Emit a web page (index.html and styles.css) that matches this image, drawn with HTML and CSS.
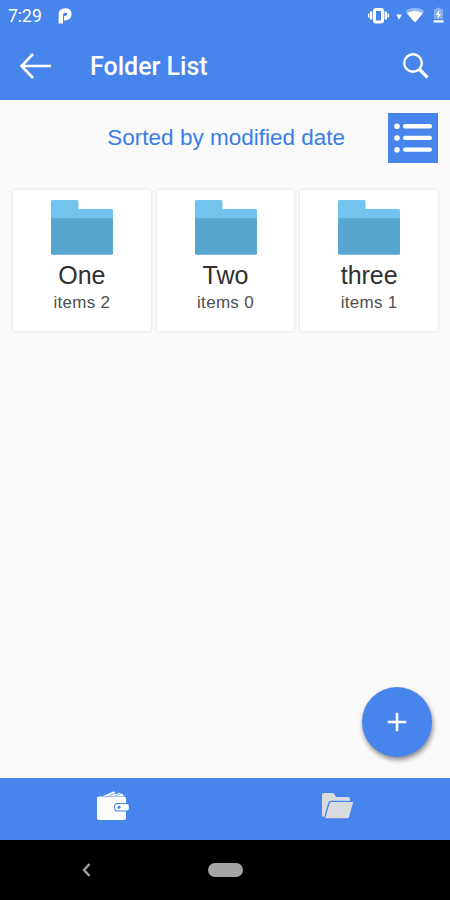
FILE: index.html
```html
<!DOCTYPE html>
<html lang="en">
<head>
    <meta charset="UTF-8">
    <meta name="viewport" content="width=device-width, initial-scale=1.0">
    <title>Folder List</title>
    <link rel="stylesheet" href="styles.css">
</head>
<body>
    <header>
        <div class="status-bar">
            <span class="time">7:29</span>
            <svg class="parking" width="14" height="16" viewBox="0 0 14 16"><path d="M2.8 15.500V6.800Q2.800 2.500 7.200 2.500T11.400 6.200T7.400 10.200H6" fill="none" stroke="#fff" stroke-width="4.400"/></svg>
            <svg class="status-icons" width="80" height="18" viewBox="0 0 80 18">
                <rect x="6.500" y="2.500" width="8" height="12.500" rx="1.500" fill="none" stroke="#fff" stroke-width="3"/>
                <path d="M3.200 4.500v8M17.800 4.500v8" stroke="#fff" stroke-width="2.400"/>
                <path d="M.8 6.500v4M20.200 6.500v4" stroke="#fff" stroke-width="1.500"/>
                <path d="M28.300 7.500h5.600L31 12.800z" fill="#fff"/>
                <path d="M37.300 4.400c5.500-4.800 13.800-4.800 19.200 0L47 15.500z" fill="#fff" opacity=".4"/>
                <path d="M39 6.600c4.500-3.600 11.400-3.600 15.800 0L47 15.500z" fill="#fff"/>
                <path d="M66 2h2.500V.8h4V2H75v10h-9z" fill="#fff" opacity=".35"/>
                <path d="M71.500 2.500L67.800 8h2.200L69.500 12l3.600-5.300h-2.300zM65.500 13.200h10v2.300h-10z" fill="#fff"/>
            </svg>
        </div>
        <div class="toolbar">
            <svg class="back" width="34" height="28" viewBox="0 0 34 28"><path d="M32 14H3M14 2L2.500 14L14 26" fill="none" stroke="#fff" stroke-width="2.600"/></svg>
            <h1>Folder List</h1>
            <svg class="search" width="28" height="28" viewBox="0 0 28 28" fill="none" stroke="#fff"><circle cx="11" cy="11" r="8.800" stroke-width="2.400"/><path d="M17.500 17.500L25.500 25.500" stroke-width="3.200"/></svg>
        </div>
    </header>

    <main>
        <div class="sort-bar">
            <span class="sort-label">Sorted by modified date</span>
            <svg class="list-btn" width="50" height="50" viewBox="0 0 50 50">
                <rect width="50" height="50" fill="#4785ed"/>
                <g fill="#fff">
                    <circle cx="9" cy="13.300" r="2.800"/><rect x="15" y="11" width="29" height="4.400" rx="2"/>
                    <circle cx="9" cy="25" r="2.800"/><rect x="15" y="22.700" width="29" height="4.400" rx="2"/>
                    <circle cx="9" cy="36.700" r="2.800"/><rect x="15" y="34.400" width="29" height="4.400" rx="2"/>
                </g>
            </svg>
        </div>

        <div class="folders">
            <div class="card">
                <svg width="62" height="55" viewBox="0 0 62 55"><path d="M1.500 0H26q1.500 0 1.500 1.500V9H60.500q1.500 0 1.500 1.500V19H0V1.500Q0 0 1.500 0z" fill="#72c3ee"/><path d="M0 18.300h62v34.900q0 1.500-1.500 1.500H1.500Q0 54.700 0 53.200z" fill="#58a6d0"/></svg>
                <span class="name">One</span>
                <span class="count">items 2</span>
            </div>
            <div class="card">
                <svg width="62" height="55" viewBox="0 0 62 55"><path d="M1.500 0H26q1.500 0 1.500 1.500V9H60.500q1.500 0 1.500 1.500V19H0V1.500Q0 0 1.500 0z" fill="#72c3ee"/><path d="M0 18.300h62v34.900q0 1.500-1.500 1.500H1.500Q0 54.700 0 53.200z" fill="#58a6d0"/></svg>
                <span class="name">Two</span>
                <span class="count">items 0</span>
            </div>
            <div class="card">
                <svg width="62" height="55" viewBox="0 0 62 55"><path d="M1.500 0H26q1.500 0 1.500 1.500V9H60.500q1.500 0 1.500 1.500V19H0V1.500Q0 0 1.500 0z" fill="#72c3ee"/><path d="M0 18.300h62v34.900q0 1.500-1.500 1.500H1.500Q0 54.700 0 53.200z" fill="#58a6d0"/></svg>
                <span class="name">three</span>
                <span class="count">items 1</span>
            </div>
        </div>

        <div class="fab">
            <svg width="20" height="20" viewBox="0 0 20 20"><path d="M10 .7v18.600M.7 10h18.600" stroke="#fff" stroke-width="2.600"/></svg>
        </div>
    </main>

    <nav class="tabs">
        <div class="tab">
            <svg width="32" height="30" viewBox="0 0 32 30">
                <path d="M6 5L17 .3l3 4.700zM14 5l9-3.500 1 3.500zM20 5l5-2.500 2 2.500z" fill="#fff"/>
                <path d="M12 5L18 2.200M18 5L23 2.800" stroke="#4785ed" stroke-width=".7"/>
                <path d="M2 5.500h25q2 0 2 2V12h-8.500q-3.500 0-3.500 4.200t3.500 4.300H29V27q0 2-2 2H2q-2 0-2-2V7.500q0-2 2-2z" fill="#fff"/>
                <path d="M21 13h9q1.800 0 1.800 1.800v2.900q0 1.800-1.800 1.800h-9q-3 0-3-3.250T21 13z" fill="#fff"/>
                <circle cx="22" cy="16.200" r="1.500" fill="#4785ed"/>
            </svg>
        </div>
        <div class="tab">
            <svg width="32" height="26" viewBox="0 0 32 26" fill="#d8dcdf">
                <path d="M0 22V2Q0 0 2 0h8q1.500 0 2.300 1.300L14 4h12q2 0 2 2v1.800H9q-2 0-2.700 2L2.200 24Q0 24 0 22z"/>
                <path d="M9.500 9H31.200L27 24q-.5 1.300-1.800 1.300H3.200L7.600 10.300Q8 9 9.500 9z"/>
            </svg>
        </div>
    </nav>

    <footer>
        <svg class="nav-back" width="9" height="14" viewBox="0 0 9 14"><path d="M7.500 1L2 7l5.500 6" fill="none" stroke="#a5a5a5" stroke-width="2.300"/></svg>
        <div class="pill"></div>
    </footer>
</body>
</html>
```
FILE: styles.css
```css
:root {
    --primary-color: #4785ed;
    --page-color: #fafafa;
}

body {
    margin: 0;
    height: 900px;
    display: flex;
    flex-direction: column;
    background-color: var(--page-color);
    font-family: 'Liberation Sans', Arial, sans-serif;
    overflow: hidden;
}

svg {
    display: block;
    flex-shrink: 0;
}

header {
    height: 100px;
    background-color: var(--primary-color);
    color: white;
    font-family: Roboto, sans-serif;
}

.status-bar {
    display: flex;
    align-items: center;
    height: 32px;
    padding: 0 2px 0 8px;
}

.time {
    width: 50px;
    font-size: 17.5px;
    font-weight: 400;
    line-height: 32px;
}

.status-icons {
    margin-left: auto;
}

.toolbar {
    display: flex;
    align-items: center;
    height: 68px;
    padding: 0 20px 0 19px;
}

h1 {
    margin: 0 0 0 37px;
    padding-top: 2px;
    font-size: 25px;
    font-weight: 500;
    line-height: 66px;
}

.search {
    margin-left: auto;
}

main {
    flex: 1;
    position: relative;
}

.sort-bar {
    display: flex;
    align-items: center;
    justify-content: flex-end;
    gap: 43px;
    height: 50px;
    padding: 13px 12px 0 0;
}

.sort-label {
    color: #3b7de8;
    font-size: 22.5px;
    white-space: nowrap;
}

.folders {
    display: flex;
    gap: 6px;
    padding: 27px 12px 0 13px;
}

.card {
    flex: 1;
    display: flex;
    flex-direction: column;
    align-items: center;
    height: 131px;
    padding-top: 10px;
    background-color: white;
    border-radius: 2px;
    box-shadow: 0 0 3px rgba(0, 0, 0, 0.16);
}

.name {
    margin-top: 6px;
    color: #303030;
    font-size: 25px;
    line-height: 28px;
}

.count {
    margin-top: 4px;
    color: #505050;
    font-size: 17px;
    letter-spacing: 0.3px;
    line-height: 19px;
}

.fab {
    position: absolute;
    right: 18px;
    bottom: 21px;
    width: 70px;
    height: 70px;
    display: flex;
    align-items: center;
    justify-content: center;
    border-radius: 50%;
    background-color: var(--primary-color);
    box-shadow: 1px 3px 5px rgba(0, 0, 0, 0.45);
}

.tabs {
    display: flex;
    height: 62px;
    background-color: var(--primary-color);
}

.tab {
    flex: 1;
    display: flex;
    align-items: center;
    justify-content: center;
    padding-bottom: 6px;
}

footer {
    display: flex;
    align-items: center;
    height: 60px;
    background-color: black;
}

.nav-back {
    margin-left: 82px;
}

.pill {
    width: 35px;
    height: 14px;
    margin-left: 117px;
    border-radius: 7px;
    background-color: #a5a5a5;
}
```
